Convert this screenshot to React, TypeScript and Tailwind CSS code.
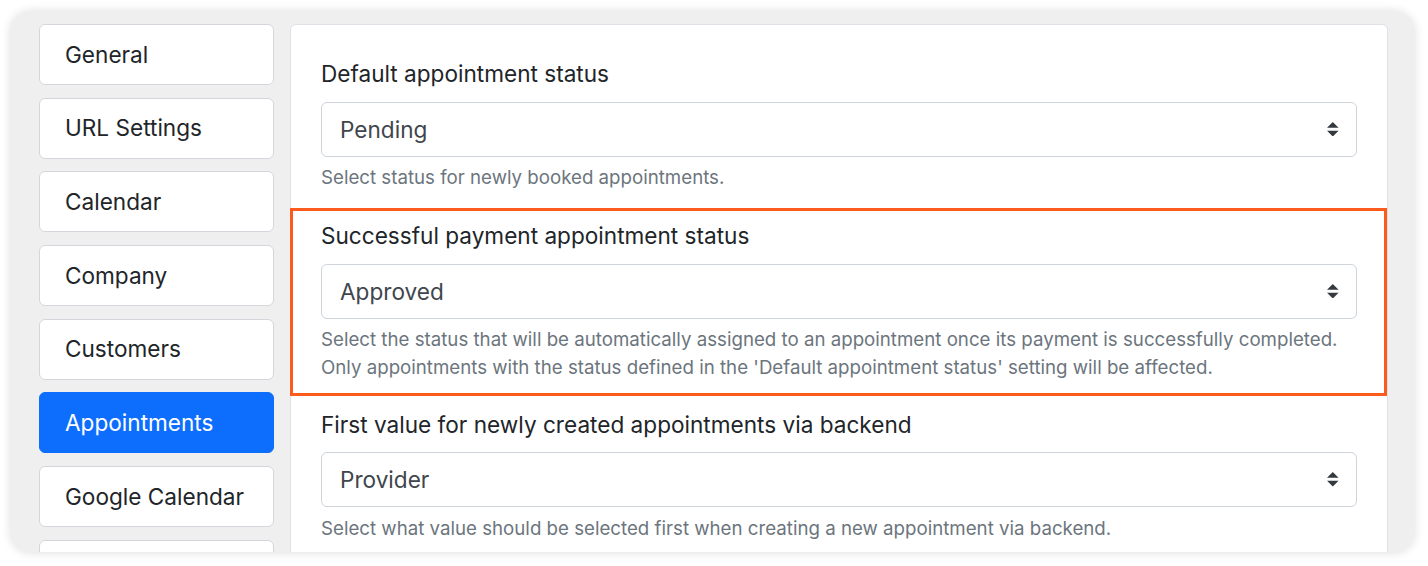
import React from "react";

const navItems = [
  "General",
  "URL Settings",
  "Calendar",
  "Company",
  "Customers",
  "Appointments",
  "Google Calendar",
  "",
];

function Arrows() {
  return (
    <svg width="11.6" height="14.5" viewBox="0 0 4 5" className="shrink-0">
      <path d="M2 0L0 2h4zm0 5L0 3h4z" fill="#343a40" />
    </svg>
  );
}

function SelectBox({ value }: { value: string }) {
  return (
    <div className="h-[55px] flex items-center justify-between pl-[18px] pr-[17px] border border-[#ced4da] rounded-[6px] bg-white text-[22.6px] text-[#40464c]">
      <span className="pt-[1px]">{value}</span>
      <Arrows />
    </div>
  );
}

function Group({
  label,
  value,
  help,
}: {
  label: string;
  value: string;
  help: string[];
}) {
  return (
    <div>
      <div className="h-[35px] leading-[35px] text-[22.6px] text-[#212529] mb-[11.5px] pt-[1px]">{label}</div>
      <SelectBox value={value} />
      <div className="mt-[7.5px] text-[18.7px] leading-[28px] text-[#6c757d]">
        {help.map((h, i) => (
          <div key={i}>{h}</div>
        ))}
      </div>
    </div>
  );
}

export default function App() {
  return (
    <div
      className="w-[1428px] h-[566px] bg-white pt-[12px] pl-[11px]"
      style={{ fontFamily: "Inter, 'Noto Sans', sans-serif" }}
    >
      <div className="w-[1403px] h-[540px] rounded-[20px] bg-[#efefef] overflow-hidden shadow-[0_0_8px_2px_rgba(0,0,0,0.1)] flex gap-[16px] pl-[28px] pr-[26px] pt-[12px]">
        <div className="w-[235px] shrink-0 flex flex-col gap-[12.7px]">
          {navItems.map((n, i) => {
            const active = n === "Appointments";
            return (
              <div
                key={i}
                className={
                  active
                    ? "h-[61px] shrink-0 flex items-center pl-[25px] rounded-[6px] border border-[#0d6efd] bg-[#0d6efd] text-[22.6px] text-white"
                    : "h-[61px] shrink-0 flex items-center pl-[25px] rounded-[6px] border border-[#d3d7dc] bg-white text-[22.6px] text-[#212529]"
                }
              >
                {n}
              </div>
            );
          })}
        </div>
        <div className="w-[1098px] h-[600px] shrink-0 bg-white border border-[#dee2e6] rounded-[6px] pt-[30px] px-[30px]">
          <Group
            label="Default appointment status"
            value="Pending"
            help={["Select status for newly booked appointments."]}
          />
          <div className="mt-[15.5px] -ml-[31px] -mr-[30px] border-[3px] border-[#fd5a1e] pt-[6.5px] pb-[11px] pl-[28px] pr-[27px]">
            <Group
              label="Successful payment appointment status"
              value="Approved"
              help={[
                "Select the status that will be automatically assigned to an appointment once its payment is successfully completed.",
                "Only appointments with the status defined in the 'Default appointment status' setting will be affected.",
              ]}
            />
          </div>
          <div className="mt-[9.5px]">
            <Group
              label="First value for newly created appointments via backend"
              value="Provider"
              help={["Select what value should be selected first when creating a new appointment via backend."]}
            />
          </div>
        </div>
      </div>
    </div>
  );
}
